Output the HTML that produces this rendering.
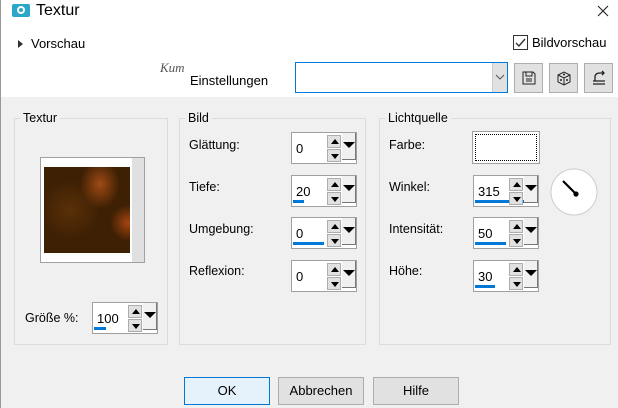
<!DOCTYPE html>
<html><head><meta charset="utf-8"><style>
*{box-sizing:border-box;margin:0;padding:0}
body{width:618px;height:408px;overflow:hidden;background:#f0f0f0;font-family:"Liberation Sans",sans-serif;font-size:12.5px;color:#000;position:relative}
.a{position:absolute}
.top{left:0;top:0;width:618px;height:97px;background:#fff}
.grp{border:1px solid #dcdcdc}
.gl{background:#f0f0f0;padding:0 3px}
.spin{position:absolute;width:66px;height:32px;border:1px solid #a0a0a0;background:#fff}
.spin .v{position:absolute;left:4px;top:8px;font-size:13px}
.spin .bar{position:absolute;left:1px;bottom:3px;height:3px;background:#0078d7}
.spin .u,.spin .d{position:absolute;left:35px;width:14px;height:13px;border:1px solid #adadad;background:#e1e1e1}
.spin .u{top:2px}.spin .d{top:16px}
.spin .u:after{content:"";position:absolute;left:3px;top:3px;border:4px solid transparent;border-bottom:5px solid #000;border-top:0}
.spin .d:after{content:"";position:absolute;left:3px;top:4px;border:4px solid transparent;border-top:5px solid #000;border-bottom:0}
.spin .dd{position:absolute;left:50px;top:0;width:14px;height:27px;border-right:1px solid #777;border-bottom:1px solid #777;background:#f0f0f0}
.spin .dd:after{content:"";position:absolute;left:1px;top:9px;border:6px solid transparent;border-top:6px solid #000;border-bottom:0}
.btn{position:absolute;height:28px;border:1px solid #adadad;background:#e1e1e1;text-align:center;line-height:26px;font-size:13px}
.ib{position:absolute;width:29px;height:30px;border:1px solid #adadad;background:#e1e1e1}
</style></head><body>
<div class="a top"></div>
<div class="a" style="left:0;top:0;width:1px;height:408px;background:#999"></div>
<div class="a" style="left:12px;top:4px;width:18px;height:13px;background:#2aa7c9;border-radius:2px"></div>
<div class="a" style="left:17px;top:6px;width:8px;height:8px;border:2px solid #fff;border-radius:50%"></div>
<div class="a" style="left:36px;top:2px;font-size:16px">Textur</div>
<svg class="a" style="left:597px;top:5px" width="12" height="12"><path d="M1 1l10 10M11 1L1 11" stroke="#222" stroke-width="1.1"/></svg>
<div class="a" style="left:18px;top:40px;border:4px solid transparent;border-left:5px solid #333;border-right:0"></div>
<div class="a" style="left:31px;top:36px;font-size:13px">Vorschau</div>
<div class="a" style="left:513px;top:35px;width:15px;height:15px;border:1px solid #333;background:#fff"></div>
<svg class="a" style="left:513px;top:35px" width="15" height="15"><path d="M3 8l3 3 6-7" stroke="#333" stroke-width="1.4" fill="none"/></svg>
<div class="a" style="left:532px;top:35px;font-size:13px">Bildvorschau</div>
<div class="a" style="left:160px;top:60px;font-family:'Liberation Serif',serif;font-style:italic;font-size:13px;color:#555">Kum</div>
<div class="a" style="left:190px;top:73px;font-size:13px">Einstellungen</div>
<div class="a" style="left:295px;top:62px;width:213px;height:31px;border:1px solid #0078d7;background:#fff"></div>
<div class="a" style="left:492px;top:63px;width:15px;height:29px;background:#e1e1e1;border-left:1px solid #ccc"></div>
<svg class="a" style="left:495px;top:73px" width="10" height="8"><path d="M1 2l4 4 4-4" stroke="#555" fill="none"/></svg>
<div class="ib" style="left:514px;top:63px"></div>
<svg class="a" style="left:521px;top:70px" width="16" height="16"><path d="M2 2h10l2 2v10H2z M5 2v4h6V2 M5 9h6M5 11h6" stroke="#222" fill="none"/></svg>
<div class="ib" style="left:549px;top:63px"></div>
<svg class="a" style="left:556px;top:70px" width="16" height="16"><path d="M2 5l6-3 6 3v7l-6 3-6-3z M2 5l6 3 6-3 M8 8v7" stroke="#222" fill="none"/><circle cx="5" cy="10" r="1" fill="#222"/><circle cx="11" cy="10" r="1" fill="#222"/><circle cx="8" cy="4.5" r="1" fill="#222"/></svg>
<div class="ib" style="left:584px;top:63px"></div>
<svg class="a" style="left:590px;top:70px" width="18" height="16"><path d="M3 14h12M3 11h12M5 11V7q0-4 5-4h4M12 1l2 2-2 2" stroke="#222" stroke-width="1.3" fill="none"/></svg>

<div class="a grp" style="left:14px;top:118px;width:154px;height:227px"></div>
<div class="a gl" style="left:20px;top:111px">Textur</div>
<div class="a" style="left:40px;top:157px;width:105px;height:106px;border:1px solid #a0a0a0;background:#e0e0e0"></div>
<div class="a" style="left:41px;top:158px;width:91px;height:104px;background:#fff"></div>
<div class="a" style="left:44px;top:167px;width:86px;height:86px;background:radial-gradient(ellipse at 65% 20%,#a04a14 0,transparent 25%),radial-gradient(circle at 98% 65%,#a54510 0,transparent 18%),radial-gradient(circle at 30% 50%,#5a3008 0,transparent 40%),#3e2004"></div>
<div class="a" style="left:25px;top:311px">Größe %:</div>
<div class="spin" style="left:92px;top:302px"><span class="v">100</span><div class="bar" style="width:12px"></div><div class="u"></div><div class="d"></div><div class="dd"></div></div>

<div class="a grp" style="left:179px;top:118px;width:187px;height:227px"></div>
<div class="a gl" style="left:185px;top:111px">Bild</div>
<div class="a" style="left:189px;top:138px">Glättung:</div>
<div class="spin" style="left:291px;top:132px"><span class="v">0</span><div class="u"></div><div class="d"></div><div class="dd"></div></div>
<div class="a" style="left:189px;top:180px">Tiefe:</div>
<div class="spin" style="left:291px;top:175px"><span class="v">20</span><div class="bar" style="width:11px"></div><div class="u"></div><div class="d"></div><div class="dd"></div></div>
<div class="a" style="left:189px;top:222px">Umgebung:</div>
<div class="spin" style="left:291px;top:217px"><span class="v">0</span><div class="bar" style="width:31px"></div><div class="u"></div><div class="d"></div><div class="dd"></div></div>
<div class="a" style="left:189px;top:264px">Reflexion:</div>
<div class="spin" style="left:291px;top:260px"><span class="v">0</span><div class="u"></div><div class="d"></div><div class="dd"></div></div>

<div class="a grp" style="left:379px;top:118px;width:232px;height:227px"></div>
<div class="a gl" style="left:385px;top:111px">Lichtquelle</div>
<div class="a" style="left:389px;top:138px">Farbe:</div>
<div class="a" style="left:472px;top:131px;width:68px;height:33px;border:1px solid #a0a0a0;background:#fff"></div>
<div class="a" style="left:475px;top:134px;width:62px;height:27px;border:1px dotted #000"></div>
<div class="a" style="left:389px;top:180px">Winkel:</div>
<div class="spin" style="left:473px;top:175px"><span class="v">315</span><div class="bar" style="width:56px"></div><div class="u"></div><div class="d"></div><div class="dd"></div></div>
<svg class="a" style="left:549px;top:168px" width="50" height="50"><circle cx="25" cy="24" r="23" fill="#fff" stroke="#ccc"/><path d="M14 13L27 26" stroke="#000" stroke-width="2.2"/><circle cx="27" cy="26" r="2.6" fill="#000"/></svg>
<div class="a" style="left:389px;top:222px">Intensität:</div>
<div class="spin" style="left:473px;top:217px"><span class="v">50</span><div class="bar" style="width:31px"></div><div class="u"></div><div class="d"></div><div class="dd"></div></div>
<div class="a" style="left:389px;top:264px">Höhe:</div>
<div class="spin" style="left:473px;top:260px"><span class="v">30</span><div class="bar" style="width:20px"></div><div class="u"></div><div class="d"></div><div class="dd"></div></div>

<div class="btn" style="left:184px;top:377px;width:86px;border-color:#0078d7;background:#e5f1fb">OK</div>
<div class="btn" style="left:278px;top:377px;width:86px">Abbrechen</div>
<div class="btn" style="left:373px;top:377px;width:86px">Hilfe</div>
</body></html>
